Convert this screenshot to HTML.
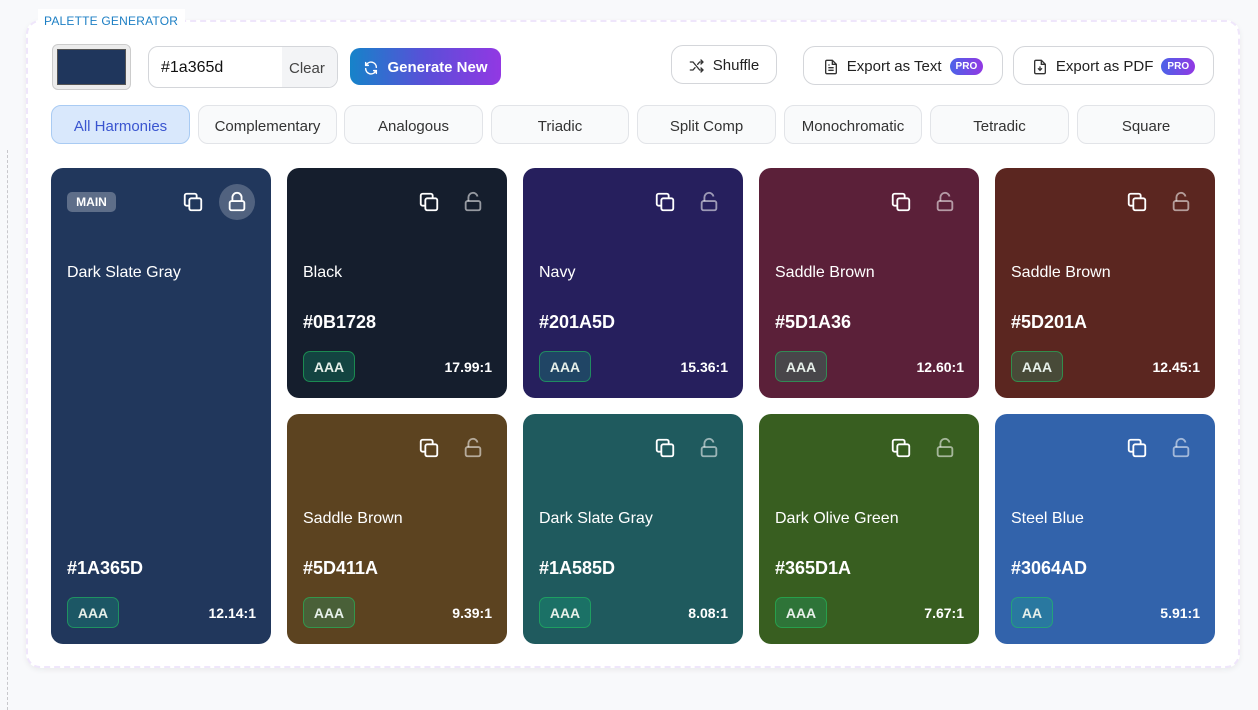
<!DOCTYPE html>
<html><head><style>
*{box-sizing:border-box;margin:0;padding:0}
body{width:1258px;height:710px;background:#f8f9fb;font-family:"Liberation Sans",sans-serif;position:relative;overflow:hidden;color:#1f2937}
.vl{position:absolute;left:7px;top:150px;bottom:0;border-left:1px dashed #c8c8cc}
.wrap{position:absolute;left:26px;top:20px;width:1214px;height:648px;background:#fff;border:2px dashed #efe6fb;border-radius:14px;box-shadow:0 2px 6px rgba(0,0,0,.06)}
.lbl{position:absolute;left:38px;top:9px;width:147px;height:22px;background:#fff;color:#1d7fc4;font-size:12px;padding:5px 0 0 6px;letter-spacing:.2px}
.abs{position:absolute}
.sw{left:52px;top:44px;width:79px;height:46px;border:1px solid #ccc;border-radius:6px;background:#ececec;padding:4px}
.sw div{width:100%;height:100%;background:#1f365c;border:1px solid #555}
.inp{left:148px;top:46px;width:190px;height:42px;border:1px solid #d4d6da;border-radius:10px;overflow:hidden;display:flex}
.inp .t{flex:1;padding:12px 12px;font-size:16px;color:#111}
.inp .c{width:55px;background:#f3f4f6;font-size:15px;color:#444;padding:13px 0 0 7px}
.gen{left:350px;top:48px;width:151px;height:37px;border-radius:10px;background:linear-gradient(90deg,#1683c9,#5a4fd8,#9238e3);color:#fff;font-size:15px;font-weight:bold;display:flex;align-items:center;justify-content:center;gap:8px;padding-top:2px}
.btn{border:1px solid #d4d6da;border-radius:12px;background:#fff;display:flex;align-items:center;justify-content:center;gap:8px;font-size:15px;color:#222;padding-top:2px}
.pro{background:linear-gradient(90deg,#4b63e8,#9238e3);color:#fff;font-size:10px;font-weight:bold;border-radius:9px;padding:3px 6px}
.tab{top:105px;height:39px;width:139px;border:1px solid #e2e4e8;border-radius:10px;background:#f9fafb;font-size:15px;color:#333;display:flex;align-items:center;justify-content:center;padding-top:3px}
.tab.on{background:#d9e8fc;border-color:#a9cbf3;color:#3a55d0}
.card{width:220px;border-radius:12px;color:#fff}
.card .nm{position:absolute;left:16px;font-size:16px;top:96px}
.card .hx{position:absolute;left:16px;font-size:18px;font-weight:bold}
.card .bd{position:absolute;left:16px;width:52px;height:31px;border-radius:7px;border:1px solid rgba(34,197,94,.55);background:rgba(16,185,129,.25);font-size:14px;font-weight:bold;display:flex;align-items:center;justify-content:center;color:#e6efe9}
.card .rt{position:absolute;right:15px;font-size:14px;font-weight:bold}
.card svg{position:absolute}
.main{position:absolute;left:16px;top:24px;width:49px;height:20px;background:rgba(255,255,255,.28);border-radius:5px;font-size:12px;font-weight:bold;text-align:center;line-height:20px}
</style></head><body>
<div class="vl"></div>
<div class="wrap"></div>
<div class="abs lbl">PALETTE GENERATOR</div>
<div class="abs sw"><div></div></div>
<div class="abs inp"><div class="t">#1a365d</div><div class="c">Clear</div></div>
<div class="abs gen"><svg width="16" height="16" viewBox="0 0 24 24" fill="none" stroke="#fff" stroke-width="2.2" stroke-linecap="round"><path d="M20 11a8 8 0 0 0-14.5-4.5M4 4v4h4M4 13a8 8 0 0 0 14.5 4.5M20 20v-4h-4"/></svg>Generate New</div>
<div class="abs btn" style="left:671px;top:45px;width:106px;height:39px"><svg width="16" height="16" viewBox="0 0 24 24" fill="none" stroke="#333" stroke-width="2" stroke-linecap="round"><path d="M2 6h4l10 12h5M2 18h4l3-3.5M13 9.5L16 6h5M18 3l3 3-3 3M18 15l3 3-3 3"/></svg>Shuffle</div>
<div class="abs btn" style="left:803px;top:46px;width:200px;height:39px"><svg width="16" height="18" viewBox="0 0 24 24" fill="none" stroke="#333" stroke-width="2"><path d="M14 2H6a2 2 0 0 0-2 2v16a2 2 0 0 0 2 2h12a2 2 0 0 0 2-2V8z M14 2v6h6M8 13h8M8 17h8M8 9h2"/></svg>Export as Text <span class="pro">PRO</span></div>
<div class="abs btn" style="left:1013px;top:46px;width:201px;height:39px"><svg width="16" height="18" viewBox="0 0 24 24" fill="none" stroke="#333" stroke-width="2"><path d="M14 2H6a2 2 0 0 0-2 2v16a2 2 0 0 0 2 2h12a2 2 0 0 0 2-2V8z M14 2v6h6M12 11v6M9 14l3 3 3-3"/></svg>Export as PDF <span class="pro">PRO</span></div>

<div class="abs tab on" style="left:51px">All Harmonies</div>
<div class="abs tab" style="left:198px">Complementary</div>
<div class="abs tab" style="left:344px">Analogous</div>
<div class="abs tab" style="left:491px;width:138px">Triadic</div>
<div class="abs tab" style="left:637px">Split Comp</div>
<div class="abs tab" style="left:784px;width:138px">Monochromatic</div>
<div class="abs tab" style="left:930px">Tetradic</div>
<div class="abs tab" style="left:1077px;width:138px">Square</div>

<div class="abs card" style="left:51px;top:168px;height:476px;background:#21375c">
<div class="main">MAIN</div>
<svg style="left:131px;top:23px" width="22" height="22" viewBox="0 0 24 24" fill="none" stroke="#fff" stroke-width="2"><rect x="8" y="8" width="13" height="13" rx="2"/><path d="M16 8V5a2 2 0 0 0-2-2H5a2 2 0 0 0-2 2v9a2 2 0 0 0 2 2h3"/></svg>
<div style="position:absolute;left:168px;top:16px;width:36px;height:36px;border-radius:50%;background:rgba(255,255,255,.22)"></div>
<svg style="left:175px;top:23px" width="22" height="22" viewBox="0 0 24 24" fill="none" stroke="#fff" stroke-width="2"><rect x="4" y="11" width="16" height="10" rx="2"/><path d="M7 11V7a5 5 0 0 1 10 0v4"/></svg>
<div class="nm">Dark Slate Gray</div>
<div class="hx" style="top:390px">#1A365D</div>
<div class="bd" style="top:429px">AAA</div>
<div class="rt" style="top:437px">12.14:1</div>
</div>

<div class="abs card" style="left:287px;top:168px;height:230px;background:#151e2d">
<svg style="left:131px;top:23px" width="22" height="22" viewBox="0 0 24 24" fill="none" stroke="#fff" stroke-width="2"><rect x="8" y="8" width="13" height="13" rx="2"/><path d="M16 8V5a2 2 0 0 0-2-2H5a2 2 0 0 0-2 2v9a2 2 0 0 0 2 2h3"/></svg>
<svg style="left:175px;top:23px" width="22" height="22" viewBox="0 0 24 24" fill="none" stroke="rgba(255,255,255,.55)" stroke-width="2"><rect x="4" y="11" width="16" height="10" rx="2"/><path d="M7 11V7a5 5 0 0 1 9.9-1"/></svg>
<div class="nm">Black</div><div class="hx" style="top:144px">#0B1728</div>
<div class="bd" style="top:183px">AAA</div><div class="rt" style="top:191px">17.99:1</div></div>
<div class="abs card" style="left:523px;top:168px;height:230px;background:#261f5d">
<svg style="left:131px;top:23px" width="22" height="22" viewBox="0 0 24 24" fill="none" stroke="#fff" stroke-width="2"><rect x="8" y="8" width="13" height="13" rx="2"/><path d="M16 8V5a2 2 0 0 0-2-2H5a2 2 0 0 0-2 2v9a2 2 0 0 0 2 2h3"/></svg>
<svg style="left:175px;top:23px" width="22" height="22" viewBox="0 0 24 24" fill="none" stroke="rgba(255,255,255,.55)" stroke-width="2"><rect x="4" y="11" width="16" height="10" rx="2"/><path d="M7 11V7a5 5 0 0 1 9.9-1"/></svg>
<div class="nm">Navy</div><div class="hx" style="top:144px">#201A5D</div>
<div class="bd" style="top:183px">AAA</div><div class="rt" style="top:191px">15.36:1</div></div>
<div class="abs card" style="left:759px;top:168px;height:230px;background:#5b2039">
<svg style="left:131px;top:23px" width="22" height="22" viewBox="0 0 24 24" fill="none" stroke="#fff" stroke-width="2"><rect x="8" y="8" width="13" height="13" rx="2"/><path d="M16 8V5a2 2 0 0 0-2-2H5a2 2 0 0 0-2 2v9a2 2 0 0 0 2 2h3"/></svg>
<svg style="left:175px;top:23px" width="22" height="22" viewBox="0 0 24 24" fill="none" stroke="rgba(255,255,255,.55)" stroke-width="2"><rect x="4" y="11" width="16" height="10" rx="2"/><path d="M7 11V7a5 5 0 0 1 9.9-1"/></svg>
<div class="nm">Saddle Brown</div><div class="hx" style="top:144px">#5D1A36</div>
<div class="bd" style="top:183px">AAA</div><div class="rt" style="top:191px">12.60:1</div></div>
<div class="abs card" style="left:995px;top:168px;height:230px;background:#5b2620">
<svg style="left:131px;top:23px" width="22" height="22" viewBox="0 0 24 24" fill="none" stroke="#fff" stroke-width="2"><rect x="8" y="8" width="13" height="13" rx="2"/><path d="M16 8V5a2 2 0 0 0-2-2H5a2 2 0 0 0-2 2v9a2 2 0 0 0 2 2h3"/></svg>
<svg style="left:175px;top:23px" width="22" height="22" viewBox="0 0 24 24" fill="none" stroke="rgba(255,255,255,.55)" stroke-width="2"><rect x="4" y="11" width="16" height="10" rx="2"/><path d="M7 11V7a5 5 0 0 1 9.9-1"/></svg>
<div class="nm">Saddle Brown</div><div class="hx" style="top:144px">#5D201A</div>
<div class="bd" style="top:183px">AAA</div><div class="rt" style="top:191px">12.45:1</div></div>

<div class="abs card" style="left:287px;top:414px;height:230px;background:#5c4320">
<svg style="left:131px;top:23px" width="22" height="22" viewBox="0 0 24 24" fill="none" stroke="#fff" stroke-width="2"><rect x="8" y="8" width="13" height="13" rx="2"/><path d="M16 8V5a2 2 0 0 0-2-2H5a2 2 0 0 0-2 2v9a2 2 0 0 0 2 2h3"/></svg>
<svg style="left:175px;top:23px" width="22" height="22" viewBox="0 0 24 24" fill="none" stroke="rgba(255,255,255,.55)" stroke-width="2"><rect x="4" y="11" width="16" height="10" rx="2"/><path d="M7 11V7a5 5 0 0 1 9.9-1"/></svg>
<div class="nm">Saddle Brown</div><div class="hx" style="top:144px">#5D411A</div>
<div class="bd" style="top:183px">AAA</div><div class="rt" style="top:191px">9.39:1</div></div>
<div class="abs card" style="left:523px;top:414px;height:230px;background:#1f5a5e">
<svg style="left:131px;top:23px" width="22" height="22" viewBox="0 0 24 24" fill="none" stroke="#fff" stroke-width="2"><rect x="8" y="8" width="13" height="13" rx="2"/><path d="M16 8V5a2 2 0 0 0-2-2H5a2 2 0 0 0-2 2v9a2 2 0 0 0 2 2h3"/></svg>
<svg style="left:175px;top:23px" width="22" height="22" viewBox="0 0 24 24" fill="none" stroke="rgba(255,255,255,.55)" stroke-width="2"><rect x="4" y="11" width="16" height="10" rx="2"/><path d="M7 11V7a5 5 0 0 1 9.9-1"/></svg>
<div class="nm">Dark Slate Gray</div><div class="hx" style="top:144px">#1A585D</div>
<div class="bd" style="top:183px">AAA</div><div class="rt" style="top:191px">8.08:1</div></div>
<div class="abs card" style="left:759px;top:414px;height:230px;background:#385e20">
<svg style="left:131px;top:23px" width="22" height="22" viewBox="0 0 24 24" fill="none" stroke="#fff" stroke-width="2"><rect x="8" y="8" width="13" height="13" rx="2"/><path d="M16 8V5a2 2 0 0 0-2-2H5a2 2 0 0 0-2 2v9a2 2 0 0 0 2 2h3"/></svg>
<svg style="left:175px;top:23px" width="22" height="22" viewBox="0 0 24 24" fill="none" stroke="rgba(255,255,255,.55)" stroke-width="2"><rect x="4" y="11" width="16" height="10" rx="2"/><path d="M7 11V7a5 5 0 0 1 9.9-1"/></svg>
<div class="nm">Dark Olive Green</div><div class="hx" style="top:144px">#365D1A</div>
<div class="bd" style="top:183px">AAA</div><div class="rt" style="top:191px">7.67:1</div></div>
<div class="abs card" style="left:995px;top:414px;height:230px;background:#3263ab">
<svg style="left:131px;top:23px" width="22" height="22" viewBox="0 0 24 24" fill="none" stroke="#fff" stroke-width="2"><rect x="8" y="8" width="13" height="13" rx="2"/><path d="M16 8V5a2 2 0 0 0-2-2H5a2 2 0 0 0-2 2v9a2 2 0 0 0 2 2h3"/></svg>
<svg style="left:175px;top:23px" width="22" height="22" viewBox="0 0 24 24" fill="none" stroke="rgba(255,255,255,.55)" stroke-width="2"><rect x="4" y="11" width="16" height="10" rx="2"/><path d="M7 11V7a5 5 0 0 1 9.9-1"/></svg>
<div class="nm">Steel Blue</div><div class="hx" style="top:144px">#3064AD</div>
<div class="bd" style="top:183px;width:42px">AA</div><div class="rt" style="top:191px">5.91:1</div></div>
</body></html>
